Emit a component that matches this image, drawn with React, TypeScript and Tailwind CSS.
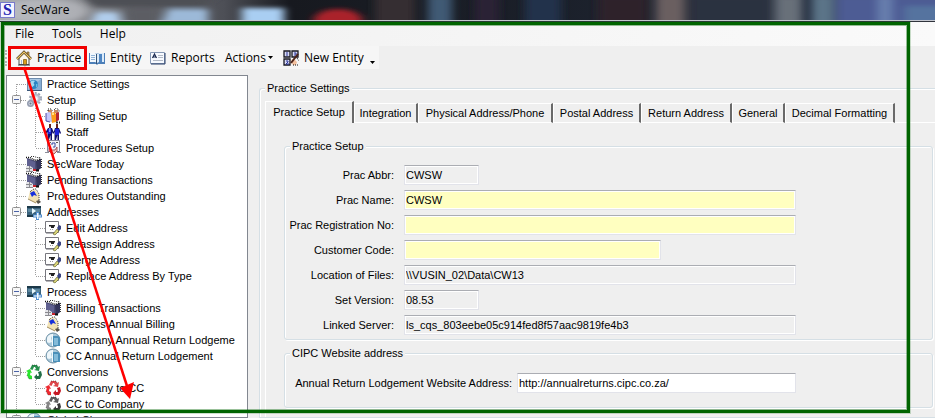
import { ReactNode, useState } from "react";

type IconName =
  | "settings"
  | "gear"
  | "billing"
  | "staff"
  | "procedure"
  | "calendar"
  | "note"
  | "folder"
  | "edit"
  | "globe"
  | "recycle"
  | "recycleRed"
  | "recycleGray";

type TreeNode = {
  label: string;
  icon: IconName;
  children?: TreeNode[];
};

const tree: TreeNode[] = [
  { label: "Practice Settings", icon: "settings" },
  {
    label: "Setup",
    icon: "gear",
    children: [
      { label: "Billing Setup", icon: "billing" },
      { label: "Staff", icon: "staff" },
      { label: "Procedures Setup", icon: "procedure" },
    ],
  },
  { label: "SecWare Today", icon: "calendar" },
  { label: "Pending Transactions", icon: "calendar" },
  { label: "Procedures Outstanding", icon: "note" },
  {
    label: "Addresses",
    icon: "folder",
    children: [
      { label: "Edit Address", icon: "edit" },
      { label: "Reassign Address", icon: "edit" },
      { label: "Merge Address", icon: "edit" },
      { label: "Replace Address By Type", icon: "edit" },
    ],
  },
  {
    label: "Process",
    icon: "folder",
    children: [
      { label: "Billing Transactions", icon: "calendar" },
      { label: "Process Annual Billing", icon: "note" },
      { label: "Company Annual Return Lodgeme", icon: "globe" },
      { label: "CC Annual Return Lodgement", icon: "globe" },
    ],
  },
  {
    label: "Conversions",
    icon: "recycle",
    children: [
      { label: "Company to CC", icon: "recycleRed" },
      { label: "CC to Company", icon: "recycleGray" },
    ],
  },
  { label: "Global Changes", icon: "globe", children: [] },
];

const tabs = [
  { label: "Practice Setup", width: "w-[89px]" },
  { label: "Integration", width: "w-[64px]" },
  { label: "Physical Address/Phone", width: "w-[135px]" },
  { label: "Postal Address", width: "w-[88px]" },
  { label: "Return Address", width: "w-[91px]" },
  { label: "General", width: "w-[53px]" },
  { label: "Decimal Formatting", width: "w-[110px]" },
];

const fields = [
  { id: "abbr", label: "Prac Abbr:", value: "CWSW", width: "max-w-[75px]", locked: true },
  { id: "name", label: "Prac Name:", value: "CWSW", width: "max-w-[392px]" },
  { id: "reg", label: "Prac Registration No:", value: "", width: "max-w-[392px]" },
  { id: "code", label: "Customer Code:", value: "", width: "max-w-[257px]" },
  { id: "files", label: "Location of Files:", value: "\\\\VUSIN_02\\Data\\CW13", width: "max-w-[392px]", locked: true },
  { id: "version", label: "Set Version:", value: "08.53", width: "max-w-[75px]", locked: true },
  { id: "server", label: "Linked Server:", value: "ls_cqs_803eebe05c914fed8f57aac9819fe4b3", width: "max-w-[392px]", locked: true },
];

const Svg = ({ children }: { children: ReactNode }) => (
  <svg viewBox="0 0 16 16" className="size-4 shrink-0" aria-hidden="true">
    {children}
  </svg>
);

const Recycle = ({ a, b, c }: { a: string; b: string; c: string }) => (
  <Svg>
    <path d="M4 5 6 1h5l1 2 2-1-1 5-5-1 2-1-1-2H8L6.500 6z" fill={a} />
    <path d="m12 8 3-1 1 4-2 4h-3v1L8 13l3-3v2h1.500l.5-1z" fill={b} />
    <path d="M0 7l4-2 2 4-1.500-.5L4 11l2 1v3H3L1 11l.8-3z" fill={c} />
    <path d="M6 1h5l1 2M1 11l2 4h3" fill="none" stroke="#222" strokeWidth=".5" strokeDasharray="1 1" />
  </Svg>
);

const icons: Record<IconName, ReactNode> = {
  settings: (
    <Svg>
      <path d="M1.500 2.500h14v12h-14z" fill="#a9c6e2" stroke="#6c8bad" />
      <path d="M2 14h13V3z" fill="#86add4" />
      <circle cx="7.500" cy="8.500" r="4.500" fill="#2b84c2" />
      <path d="M4 7c1-3 4-3 5-2L7.500 7l1 2-2 2-2-1z" fill="#a4d8f0" />
      <path d="M10 8h1.500l-.5 3-1 .5z" fill="#65bfe5" />
      <path d="M1 14.500h15" stroke="#3d597b" />
    </Svg>
  ),
  gear: (
    <Svg>
      <circle cx="9.500" cy="6.500" r="5.500" fill="none" stroke="#9ba3b4" strokeWidth="2" strokeDasharray="2 1.500" />
      <circle cx="9.500" cy="6.500" r="5" fill="#b4bbca" />
      <circle cx="9.500" cy="6.500" r="3" fill="#d7dbe5" />
      <circle cx="10" cy="6.500" r="1.500" fill="#fafbfd" />
      <circle cx="4.500" cy="11.500" r="3.500" fill="#949daf" />
      <circle cx="4.500" cy="11.500" r="2" fill="#c9cedb" />
      <circle cx="4.500" cy="11.500" r="1" fill="#6c7587" />
    </Svg>
  ),
  billing: (
    <Svg>
      <path d="M3 2h4v3H3zM9 2h4v3H9z" fill="#c98a65" />
      <path d="M3 3V1h3l2 2M9 2l2-2 3 2v2" fill="none" stroke="#111" strokeDasharray="1 1" />
      <path d="M1 5l3-1 3 1v9l-6-1z" fill="#c4c5fa" />
      <path d="M1 5v8l4 1" fill="none" stroke="#5152a8" />
      <path d="M6 5l3-1 2 2v8l-4 1z" fill="#ff9e19" />
      <path d="M11 5l3-1v8l-3 2z" fill="#b52732" />
      <path d="M7 5h2v2H7z" fill="#ffe184" />
      <path d="M11 14.500h4" stroke="#333" strokeWidth="2" strokeDasharray="2 1" />
    </Svg>
  ),
  staff: (
    <Svg>
      <path d="M4 0h2v4H4zM11 0h2v4h-2z" fill="#6a241c" />
      <path d="M3 4h4l2 5-1 1-1-2v8H5.500v-5L4 16H2.500V8L1 10 0 9zM10 4h4l2 5-1 1-1-2v8h-1.500v-5L11 16H9.500V8L8 10z" fill="#10106e" />
      <path d="M3 5h3v5H3zM10 5h4v6h-4z" fill="#1d22d6" />
      <path d="M4 4h1.500v4H4z" fill="#7ea0f8" />
    </Svg>
  ),
  procedure: (
    <Svg>
      <path d="M2.500.500h12v11h-12z" fill="#f4f4f8" stroke="#85849a" />
      <path d="M7 5V3h3v4H8" fill="none" stroke="#3b4aa0" />
      <path d="M5 2.500h1M11 2.500h2M4 7.500h2" stroke="#555" />
      <path d="M4 8l2 2h4l2-3v4l-3 3H7l-3-3z" fill="#edc3be" stroke="#963a3e" strokeWidth=".8" />
      <path d="M0 12.500h4M12 12.500h4" stroke="#8d8d98" />
    </Svg>
  ),
  calendar: (
    <Svg>
      <path d="M1 2l9 3 5-2v9l-4 3-10-4z" fill="#4b4c75" />
      <path d="M1 3l8 3v7l-8-3z" fill="#5f6090" />
      <path d="M10 5l5-2v9l-4 3z" fill="#33345a" />
      <path d="M0 1.500h4l3 2 4 1 4-2" fill="none" stroke="#111" strokeWidth="1.500" strokeDasharray="1 1" />
      <path d="M5 .500h3l3 1h4M15.500 3v9" fill="none" stroke="#333" strokeDasharray="1 1" />
      <path d="M0 10h4l3 2v4H0z" fill="#e4e4e8" />
      <path d="M0 12.500h6M3.500 10v6M0 15.500h7" stroke="#8a8a90" />
      <path d="M7 13h3v2H7z" fill="#c6232d" />
      <path d="M10 14.500h3" stroke="#111" strokeWidth="2" />
    </Svg>
  ),
  note: (
    <Svg>
      <path d="M4 3l4-2 5 5v8l-3 1-8-4z" fill="#f2e2b4" />
      <path d="M4 4l2-2 2-1h2l3 5v6" fill="none" stroke="#333" strokeDasharray="1 1" />
      <path d="M4 5l4-2 3 5-3-1-2 2z" fill="#1730dd" />
      <path d="M2 11l8 4" stroke="#a18c60" />
      <path d="M10 13l3-1 2 2-3 2z" fill="#57534a" />
    </Svg>
  ),
  folder: (
    <Svg>
      <path d="M1 2h14v11H1z" fill="#3a627c" />
      <path d="M1 2h14v2H1zM1 11h9v2H1z" fill="#1b3848" />
      <path d="M2 5h12v3H2z" fill="#5c879f" />
      <path d="M6 4l4 3-4 3z" fill="#e9f7fc" />
      <path d="M10 8h3v2.500h3v3h-3V16h-3v-2.500H7v-3h3z" fill="#4f8dd0" />
      <path d="M11 9h1.500v2.500H15v1h-2.500V15H11v-2.500H8v-1h3z" fill="#f2f9ff" />
    </Svg>
  ),
  edit: (
    <Svg>
      <path d="M.500 1.500h13v11H.500z" fill="#fff" stroke="#77777e" />
      <path d="M1 13.500h10" stroke="#b5b5b9" />
      <path d="M4 5h6v1.500H9V8H6V6.500H4z" fill="#222" />
      <path d="M5 9.500h4" stroke="#999" strokeDasharray="1 1" />
      <path d="M8 14l4-5 2 2-4 4z" fill="#d9d477" stroke="#555524" strokeWidth=".6" />
      <path d="M12 8l2-3 2 1v3l-2 2z" fill="#394380" />
    </Svg>
  ),
  globe: (
    <Svg>
      <circle cx="8" cy="8" r="7" fill="#a9c8da" stroke="#6b8ea3" />
      <path d="M2 6c1-3 3-4 6-4L6 6l1 4-3 1-2-1z" fill="#eef6fa" />
      <path d="M8 4h4c2 0 3 1 3 3v7H8z" fill="#4a8fb8" />
      <path d="M9 6h4v7H9z" fill="#84bbd9" />
      <path d="M7.500 2v12" stroke="#f4fafc" />
    </Svg>
  ),
  recycle: <Recycle a="#278f4c" b="#226f48" c="#2ae52e" />,
  recycleRed: <Recycle a="#df4549" b="#c71924" c="#ee2930" />,
  recycleGray: <Recycle a="#5d5d5d" b="#393939" c="#858585" />,
};

const HouseIcon = () => (
  <Svg>
    <path d="M3 8l5-5 5 5v6.500H3z" fill="#fdf8ea" stroke="#505050" />
    <path d="M11 2h2v4l-2-2z" fill="#d6aa59" stroke="#59451c" strokeWidth=".6" />
    <path d="M1 9l7-7 7 7" fill="none" stroke="#4d3b1b" strokeWidth="2.500" />
    <path d="M1 9l7-7 7 7" fill="none" stroke="#f0cb69" strokeWidth="1.200" />
    <path d="M7.500 9.500h3V15h-3z" fill="#d89d1b" stroke="#76540d" strokeWidth=".7" />
    <path d="M5.500 10v4" stroke="#9dbbe0" />
    <path d="M2 15h12" stroke="#39414d" />
  </Svg>
);

const BookIcon = () => (
  <Svg>
    <path d="M0 3h7l1 1 1-1h7v11H9l-1 1-1-1H0z" fill="#4c7fb8" />
    <path d="M1 3h5l2 1v9l-2-1H1z" fill="#f1f7fd" />
    <path d="M8 4l2-1h5v9h-5l-2 1z" fill="#dcebf9" />
    <path d="M7.500 4v10" stroke="#345478" />
    <path d="M2 5.500h4M2 7.500h4M2 9.500h4" stroke="#8fb3d8" />
    <path d="M10 4h3v8h-3z" fill="#4f86c3" />
  </Svg>
);

const ReportIcon = () => (
  <Svg>
    <path d="M.500 2.500h14v11H.500z" fill="#f7faff" stroke="#8799b5" />
    <path d="M1 14h14V3" fill="none" stroke="#293e68" />
    <path d="M2.500 8L4.500 4l2 4M3 7h3" fill="none" stroke="#17264d" strokeWidth="1.200" />
    <path d="M8 5.500h5M8 7.500h5M3 10.500h10" stroke="#b3bac6" />
  </Svg>
);

const NewEntityIcon = () => (
  <Svg>
    <path d="M1 1h6v6H1zM9 1h6v6H9zM1 9h6v6H1z" fill="#d7d9f4" stroke="#191923" strokeWidth="1.300" />
    <path d="M4 2v4M11 3h2v2h-2M3 11h2v1l-2 2h3" fill="none" stroke="#2f399a" />
    <path d="M9 9l3 1 2 2-1 3h-3l-2-3z" fill="#f3c09e" />
    <path d="M8 13l7-9" stroke="#4b2319" strokeWidth="2" />
    <path d="M14 8l2 3M10 15h5" stroke="#111" strokeDasharray="1 1" />
  </Svg>
);

const Caret = () => (
  <svg viewBox="0 0 5 3" className="h-[3px] w-[5px] shrink-0" aria-hidden="true">
    <path d="M0 0h5L2.500 3z" fill="#000" />
  </svg>
);

// Blurred desktop seen through the glass title bar
const Glass = () => (
  <svg viewBox="0 0 935 20" preserveAspectRatio="none" className="absolute inset-0 size-full" aria-hidden="true">
    <defs>
      <filter id="soft" x="-20%" y="-50%" width="140%" height="200%">
        <feGaussianBlur stdDeviation="5 2" />
      </filter>
      <linearGradient id="sheen" x1="0" x2="1">
        <stop offset="0" stopColor="#a8abb0" />
        <stop offset=".08" stopColor="#929499" />
        <stop offset=".14" stopColor="#66676c" />
        <stop offset=".24" stopColor="#4d4f56" />
        <stop offset=".31" stopColor="#17191f" />
        <stop offset=".6" stopColor="#1b202a" />
        <stop offset="1" stopColor="#263247" />
      </linearGradient>
    </defs>
    <rect width="935" height="20" fill="url(#sheen)" />
    <g filter="url(#soft)">
      <path d="M80-5h140l-20 12H94z" fill="#4e4f54" />
      <path d="M96 12h22l4 14H90z" fill="#b0cdec" />
      <path d="M168 9h40v15h-46z" fill="#9cb9d8" />
      <path d="M125 8h34v20h-30z" fill="#5b5d63" />
      <path d="M242 8h42v17h-42z" fill="#a9cef2" />
      <ellipse cx="338" cy="20" rx="24" ry="11" fill="#aa202c" />
      <path d="M375-4h40v30h-40z" fill="#352f33" />
      <path d="M428-4h24v30h-24z" fill="#3f5a75" />
      <path d="M475-4h24v30h-24z" fill="#2b2136" />
      <path d="M525-4h36v30h-36z" fill="#20324c" />
      <path d="M598-4h50v30h-50z" fill="#2f222c" />
      <path d="M656-4h29v30h-29z" fill="#6b5e60" />
      <path d="M690-4h82v30h-82z" fill="#2b3340" />
      <path d="M775-4h27v30h-27z" fill="#687079" />
      <path d="M812-4h22v30h-22z" fill="#5c7488" />
      <path d="M836-4h110v30H836z" fill="#4d5b94" />
      <path d="M878-4h14v30h-14z" fill="#687fae" />
      <path d="M905 6h40v20h-40z" fill="#54739f" />
    </g>
    <ellipse cx="44" cy="11" rx="44" ry="12" fill="#c9cbd0" opacity=".5" filter="url(#soft)" />
  </svg>
);

const Guide = ({ x, expander, first, last }: { x?: boolean; expander?: boolean; first?: boolean; last?: boolean }) => (
  <svg viewBox="0 0 19 16" className="h-4 w-[19px] shrink-0" aria-hidden="true">
    <path d={`M9.500 ${first ? 8 : 0}V${last ? 8 : 16}`} stroke="#a0a0a0" strokeDasharray="1 1" />
    {x && <path d="M10 8.500h9" stroke="#a0a0a0" strokeDasharray="1 1" />}
    {expander && (
      <>
        <rect x="5.500" y="3.500" width="8" height="8" rx="1" fill="#f6f6f6" stroke="#919191" />
        <path d="M7 7.500h5" stroke="#4b63a7" />
      </>
    )}
  </svg>
);

const Tree = () => (
  <ul className="w-[242px] shrink-0 overflow-hidden border border-[#828790] bg-white">
    {tree.map((node, i) => (
      <li key={node.label}>
        <div className="flex h-4 items-center whitespace-nowrap">
          <Guide x expander={!!node.children} first={i === 0} />
          {icons[node.icon]}
          <span className="pl-[5px]">{node.label}</span>
        </div>
        <ul>
          {node.children?.map((child, j) => (
            <li key={child.label} className="flex h-4 items-center whitespace-nowrap">
              <Guide />
              <Guide x last={j === node.children!.length - 1} />
              {icons[child.icon]}
              <span className="pl-[5px]">{child.label}</span>
            </li>
          ))}
        </ul>
      </li>
    ))}
  </ul>
);

const Group = ({ title, className, children }: { title: string; className: string; children: ReactNode }) => (
  <fieldset
    className={`min-w-0 border border-[#d5dfe5] shadow-[inset_1px_1px_0_#fff,1px_1px_0_#fff] ${className}`}
  >
    <legend className="ml-[5px] bg-[#efefef] px-[2px] leading-4">{title}</legend>
    {children}
  </fieldset>
);

const inputStyle =
  "h-5 w-full border border-[#e2e3ea] border-t-[#abadb3] px-px shadow-[inset_0_0_0_1px_#fff] outline-none";

const App = () => {
  const [active, setActive] = useState("Practice Setup");

  return (
    <div className="relative flex h-screen flex-col overflow-hidden bg-[#efefef] font-['Liberation_Sans',Arial,sans-serif] text-[11px] text-black">
      <header className="relative flex h-[22px] shrink-0 items-center border-b border-[#30343c] bg-[#c5c8d0] pb-px font-['Open_Sans',sans-serif] text-[12px]">
        <div className="relative flex h-5 w-full items-center gap-[6px]">
          <Glass />
          <span className="relative flex h-4 w-[15px] items-center justify-center border border-[#7a7acb] bg-[#f4f4ff] font-['Liberation_Serif',serif] text-[16px] font-bold text-[#2020b0]">
            S
          </span>
          <h1 className="relative">SecWare</h1>
        </div>
      </header>

      <div className="shrink-0 font-['Open_Sans',sans-serif] text-[12px]">
        <nav className="flex h-6 items-center gap-[18px] bg-linear-to-r from-[#f0f0f0] to-[#fafafa] pl-[15px]">
          <button>File</button>
          <button>Tools</button>
          <button>Help</button>
        </nav>
        <div className="flex">
          <div className="flex h-[23px] items-center bg-[#f6f6f6] pr-1 pl-[5px] whitespace-nowrap">
            <span className="mr-[9px] h-4 w-[2px] border-l-2 border-dotted border-[#b5b5b5]" />
            <button className="relative flex w-[73px] items-center gap-[5px]">
              <HouseIcon />
              Practice
              <span className="absolute -inset-y-[3px] right-[2px] -left-2 border-[3px] border-[#f00000]" />
            </button>
            <button className="flex w-[61px] items-center gap-[5px]">
              <BookIcon />
              Entity
            </button>
            <button className="flex w-[75px] items-center gap-[5px]">
              <ReportIcon />
              Reports
            </button>
            <button className="flex w-[58px] items-center gap-[2px]">
              Actions
              <Caret />
            </button>
            <button className="flex w-[87px] items-center gap-[5px]">
              <NewEntityIcon />
              New Entity
            </button>
            <button aria-label="More buttons" className="self-end pb-[5px]">
              <Caret />
            </button>
          </div>
        </div>
      </div>

      <main className="flex min-h-0 flex-1 gap-[11px] pt-[6px] pl-[6px]">
        <Tree />
        <Group title="Practice Settings" className="mt-[5px] flex-1 rounded-tl-[3px] border-r-0">
          <div className="flex h-full flex-col pt-[5px] pl-[5px]">
            <div role="tablist" className="flex items-end whitespace-nowrap">
              {tabs.map(({ label, width }) => (
                <button
                  key={label}
                  role="tab"
                  aria-selected={label === active}
                  onClick={() => setActive(label)}
                  className={`shrink-0 border-t border-r-2 border-l border-t-white border-r-[#696969] border-l-white ${width} ${
                    label === active ? "h-[22px]" : "h-5 border-b border-b-white"
                  }`}
                >
                  {label}
                </button>
              ))}
              <span className="flex-1 self-end border-b border-white" />
            </div>
            <div className="flex flex-1 flex-col gap-[5px] border-l border-white pt-[15px] pr-[2px] pl-[18px]">
              <Group title="Practice Setup" className="rounded-[3px]">
                <div className="flex flex-col gap-[5px] pt-[11px] pb-1">
                  {fields.map(({ id, label, value, width, locked }) => (
                    <div key={id} className="flex items-center gap-[10px]">
                      <label htmlFor={id} className="w-[109px] shrink-0 text-right whitespace-nowrap">
                        {label}
                      </label>
                      <input
                        id={id}
                        defaultValue={value}
                        readOnly={locked}
                        className={`${inputStyle} ${width} ${locked ? "bg-[#efefef]" : "bg-[#ffffc0]"}`}
                      />
                    </div>
                  ))}
                </div>
              </Group>
              <Group title="CIPC Website address" className="rounded-[3px]">
                <div className="flex items-center gap-[5px] pt-3 pb-[14px]">
                  <label htmlFor="website" className="w-[227px] shrink-0 text-right whitespace-nowrap">
                    Annual Return Lodgement Website Address:
                  </label>
                  <input
                    id="website"
                    defaultValue="http://annualreturns.cipc.co.za/"
                    className={`${inputStyle} max-w-[279px] bg-white`}
                  />
                </div>
              </Group>
            </div>
          </div>
        </Group>
      </main>

      {/* Callout frame and arrow */}
      <div className="pointer-events-none absolute top-[22px] right-[25px] bottom-[5px] left-px border-[3px] border-[#006400] shadow-[0_0_0_1px_#00640033,inset_0_0_0_1px_#00640066]" />
      <svg viewBox="0 0 140 410" className="pointer-events-none absolute top-0 left-0 h-[410px] w-[140px]" aria-hidden="true">
        <path d="M24 67L127 386" stroke="#f00" strokeWidth="2.500" />
        <path d="M130 399l-10-11 14-6z" fill="#f00" />
      </svg>
    </div>
  );
};

export default App;
